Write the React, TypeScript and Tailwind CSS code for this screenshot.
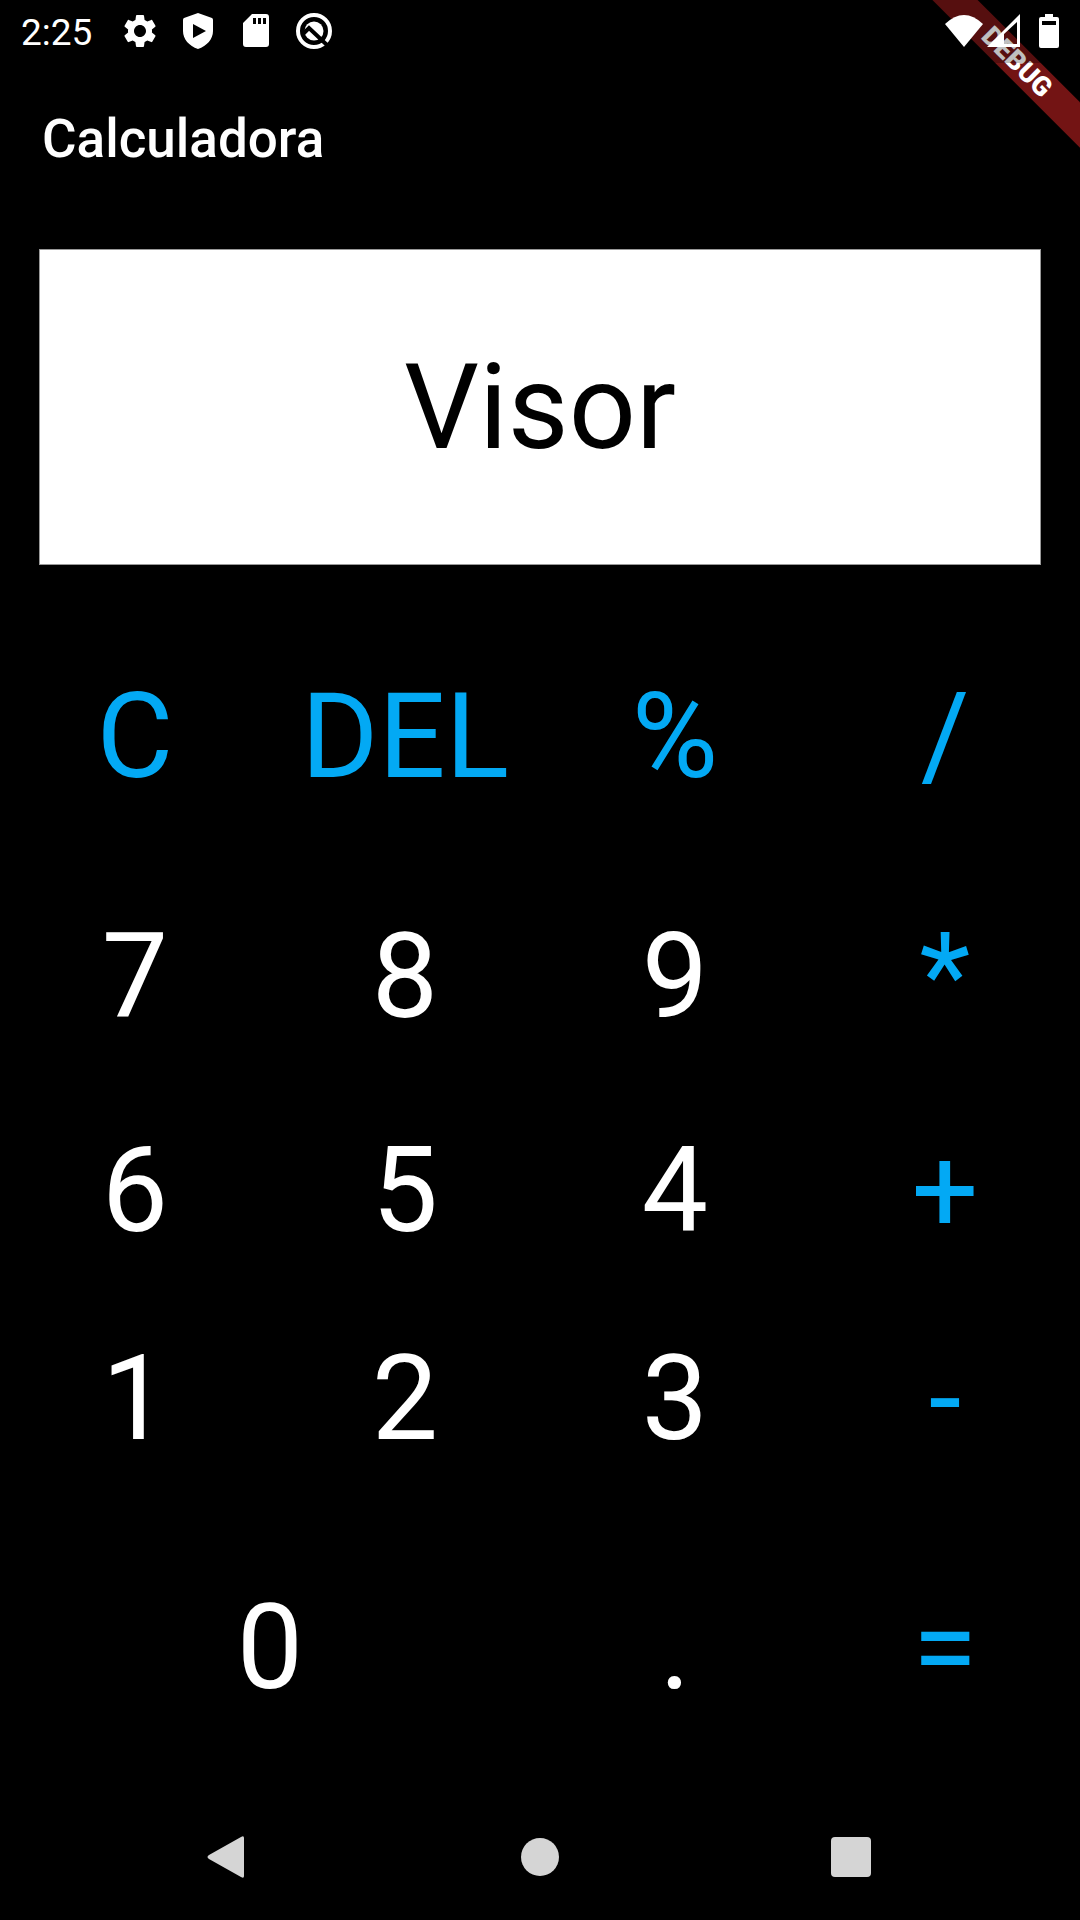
import { useState } from "react";

type Key = { label: string; accent?: boolean; wide?: boolean };

const keys: Key[] = [
  { label: "C", accent: true },
  { label: "DEL", accent: true },
  { label: "%", accent: true },
  { label: "/", accent: true },
  { label: "7" },
  { label: "8" },
  { label: "9" },
  { label: "*", accent: true },
  { label: "6" },
  { label: "5" },
  { label: "4" },
  { label: "+", accent: true },
  { label: "1" },
  { label: "2" },
  { label: "3" },
  { label: "-", accent: true },
  { label: "0", wide: true },
  { label: "." },
  { label: "=", accent: true },
];

function SettingsIcon() {
  return (
    <svg viewBox="0 0 24 24" className="size-10" fill="currentColor" aria-hidden="true">
      <path d="M19.14 12.94c.04-.3.06-.61.06-.94 0-.32-.02-.64-.07-.94l2.03-1.58c.18-.14.23-.41.12-.61l-1.92-3.32c-.12-.22-.37-.29-.59-.22l-2.39.96c-.5-.38-1.03-.7-1.62-.94l-.36-2.54c-.04-.24-.24-.41-.48-.41h-3.84c-.24 0-.43.17-.47.41l-.36 2.54c-.59.24-1.13.57-1.62.94l-2.39-.96c-.22-.08-.47 0-.59.22L2.74 8.87c-.12.21-.08.47.12.61l2.03 1.58c-.05.3-.09.63-.09.94s.02.64.07.94l-2.03 1.58c-.18.14-.23.41-.12.61l1.92 3.32c.12.22.37.29.59.22l2.39-.96c.5.38 1.03.7 1.62.94l.36 2.54c.05.24.24.41.48.41h3.84c.24 0 .44-.17.47-.41l.36-2.54c.59-.24 1.13-.56 1.62-.94l2.39.96c.22.08.47 0 .59-.22l1.92-3.32c.12-.22.07-.47-.12-.61l-2.01-1.58zM12 15.6c-1.98 0-3.6-1.62-3.6-3.6s1.62-3.6 3.6-3.6 3.6 1.62 3.6 3.6-1.62 3.6-3.6 3.6z" />
    </svg>
  );
}

function ShieldPlayIcon() {
  return (
    <svg viewBox="0 0 40 40" className="size-10" fill="currentColor" aria-hidden="true">
      <path
        fillRule="evenodd"
        d="M20 2 34 7q1 .5 1 2v11c0 8-6 15-15 18C11 35 5 28 5 20V9q0-1.5 1-2zM15 13v14l13-7z"
      />
    </svg>
  );
}

function SdCardIcon() {
  return (
    <svg viewBox="0 0 40 40" className="size-10" fill="currentColor" aria-hidden="true">
      <path
        fillRule="evenodd"
        d="M16 3h14q3 0 3 3v27q0 3-3 3H10q-3 0-3-3V12zM17 7v6h3V7zM22 7v6h3V7zM27 7v6h3V7z"
      />
    </svg>
  );
}

function AndroidQIcon() {
  return (
    <svg viewBox="0 0 40 40" className="size-10" fill="none" aria-hidden="true">
      <circle cx="20" cy="20" r="16" stroke="white" strokeWidth="4" />
      <circle cx="20" cy="20" r="9.5" fill="white" />
      <path d="M9 23 15 17 33 34" stroke="black" strokeWidth="4" />
    </svg>
  );
}

function WifiIcon() {
  return (
    <svg viewBox="0 0 40 33" className="h-[33px] w-10" fill="currentColor" aria-hidden="true">
      <path d="M1 10Q20-8 39 10L20 33z" />
    </svg>
  );
}

function SignalIcon() {
  return (
    <svg viewBox="0 0 33 33" className="size-[33px]" fill="currentColor" aria-hidden="true">
      <path fillRule="evenodd" d="M33 0v33H0zM30 8 17 20v10h13z" />
    </svg>
  );
}

function BatteryIcon() {
  return (
    <svg viewBox="0 0 20 34" className="h-[34px] w-5" fill="currentColor" aria-hidden="true">
      <path fillRule="evenodd" d="M6 0h8v3h4q2 0 2 2v27q0 2-2 2H2q-2 0-2-2V5q0-2 2-2h4zM3 7v4h14V7z" />
    </svg>
  );
}

function StatusBar() {
  return (
    <div className="relative z-20 flex h-[63px] items-center justify-between bg-black/25 px-[21px] pb-0.5">
      <div className="flex items-center">
        <span className="pt-1 text-[37px] leading-[44px]">2:25</span>
        <div className="ml-7 flex gap-[18px]">
          <SettingsIcon />
          <ShieldPlayIcon />
          <SdCardIcon />
          <AndroidQIcon />
        </div>
      </div>
      <div className="flex items-center">
        <WifiIcon />
        <div className="ml-[3px]">
          <SignalIcon />
        </div>
        <div className="ml-[19px]">
          <BatteryIcon />
        </div>
      </div>
    </div>
  );
}

function DebugBanner() {
  return (
    <div className="pointer-events-none absolute top-0 right-0 z-10 size-[160px] overflow-hidden">
      <div className="absolute top-[46px] -right-[77px] flex h-8 w-[280px] rotate-45 items-center justify-center bg-[#731414] text-[27px] font-black text-white">
        DEBUG
      </div>
    </div>
  );
}

function NavigationBar() {
  return (
    <nav aria-label="Sistema" className="grid h-[126px] grid-cols-3 px-[73px] text-[#d5d5d5]">
      <button aria-label="Voltar" className="flex items-center justify-center">
        <svg viewBox="0 0 44 44" className="size-11" fill="currentColor" aria-hidden="true">
          <path d="M34 2q3-2 3 1v38q0 3-3 1L2 24q-3-2 0-4z" />
        </svg>
      </button>
      <button aria-label="Início" className="flex items-center justify-center">
        <span className="size-[38px] rounded-full bg-current" />
      </button>
      <button aria-label="Recentes" className="flex items-center justify-center">
        <span className="size-10 rounded bg-current" />
      </button>
    </nav>
  );
}

export default function App() {
  const [display, setDisplay] = useState("Visor");

  const press = (label: string) => {
    if (label === "C") return setDisplay("Visor");
    if (label === "DEL") return setDisplay((d) => (d === "Visor" ? d : d.slice(0, -1) || "Visor"));
    if (label === "=") return;
    setDisplay((d) => (d === "Visor" ? label : d + label));
  };

  return (
    <div className="relative flex min-h-screen flex-col overflow-hidden bg-black font-[Roboto,sans-serif] text-white">
      <StatusBar />
      <DebugBanner />
      <header className="flex h-[147px] items-center px-[42px] pt-1">
        <h1 className="text-[53px] leading-[60px] font-medium">Calculadora</h1>
      </header>
      <main className="flex flex-1 flex-col">
        <output className="mx-[39px] mt-[39px] mb-10 block overflow-hidden border border-[#999] bg-white pt-[88px] pb-[86px] text-center text-[118px] leading-[140px] text-black">
          {display}
        </output>
        <div className="grid flex-1 grid-cols-4 grid-rows-[264fr_216fr_212fr_206fr_292fr]">
          {keys.map((key) => (
            <button
              key={key.label}
              onClick={() => press(key.label)}
              className={`flex items-center justify-center text-[118px] leading-[140px] ${
                key.accent ? "text-[#03a9f4]" : "text-white"
              } ${key.wide ? "col-span-2" : ""}`}
            >
              {key.label}
            </button>
          ))}
        </div>
      </main>
      <NavigationBar />
    </div>
  );
}
